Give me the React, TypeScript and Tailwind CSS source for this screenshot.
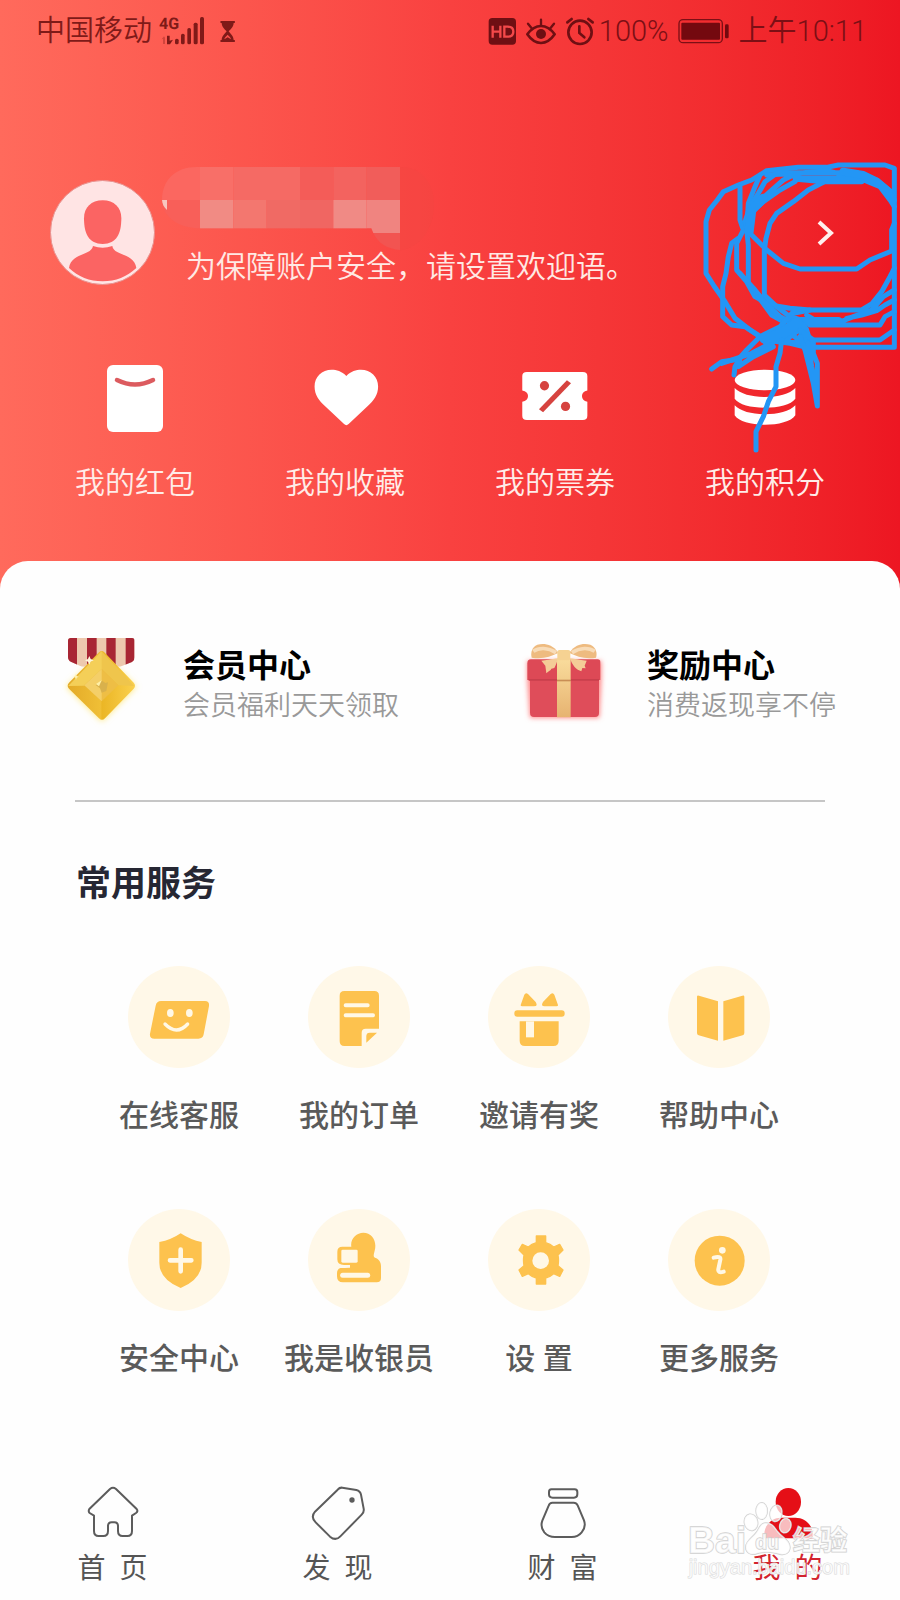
import type { ReactNode } from "react";

function SignalIcon() {
  return (
    <svg viewBox="475 42 144 96" className="h-8 w-12 shrink-0" fill="#7f1a18" aria-hidden="true">
      <text x="478" y="84" fontSize="48" fontWeight="700" fontFamily='"Liberation Sans Narrow", "Roboto", sans-serif' textRendering="geometricPrecision">4G</text>
      <path d="M486 115l7-9 3 4v19h-6v-15z" opacity=".35" />
      <path d="M502 104h8v15l10-3-9 14h-9z" />
      <rect x="526" y="113" width="11" height="17" rx="5" />
      <rect x="544" y="98" width="11" height="32" rx="5" />
      <rect x="563" y="81" width="11" height="49" rx="5" />
      <rect x="582" y="65" width="12" height="65" rx="5" />
      <rect x="601" y="48" width="12" height="82" rx="5" />
    </svg>
  );
}

function HourglassIcon() {
  return (
    <svg viewBox="655 54 60 72" className="h-6 w-5 shrink-0" fill="#7f1a18" aria-hidden="true">
      <rect x="662" y="60" width="44" height="6" rx="2" />
      <rect x="662" y="117" width="44" height="6" rx="2" />
      <path d="M666 65h36c0 12-9 19-15 26 6 8 15 14 15 27h-36c0-13 9-19 15-27-6-7-15-14-15-26z" />
      <path d="M674 115c1-6 5-9 10-14 5 5 9 8 10 14l-10-6z" fill="#fb514c" />
    </svg>
  );
}

function StatusIcons() {
  return (
    <svg viewBox="105 42 330 96" className="h-8 w-[110px] shrink-0" fill="none" stroke="#6f0f13" aria-hidden="true">
      <rect x="110" y="51" width="82" height="80" rx="11" fill="#6f0f13" stroke="none" />
      <path d="M122 74v36M145 74v36M122 92h23M157 77v30h10q17 0 17-15t-17-15z" stroke="#f4494a" strokeWidth="7" />
      <path d="M226 100q18-25 41-25t41 25q-18 26-41 26t-41-26z" strokeWidth="8" strokeLinejoin="round" />
      <circle cx="267" cy="99" r="15" fill="#6f0f13" stroke="none" />
      <path d="M267 56v16M228 68l11 14M306 68l-11 14" strokeWidth="7" strokeLinecap="round" />
      <circle cx="384" cy="94" r="35" strokeWidth="8" />
      <path d="M382 76v20l15 13M346 64l13-10M422 64l-13-10" strokeWidth="8" strokeLinecap="round" />
    </svg>
  );
}

function BatteryIcon() {
  return (
    <svg viewBox="675 48 162 84" className="h-7 w-[54px] shrink-0" fill="none" aria-hidden="true">
      <rect x="681" y="56" width="130" height="69" rx="12" stroke="#7c0f15" strokeWidth="4" />
      <rect x="688" y="65" width="116" height="51" rx="3" fill="#74090f" />
      <rect x="819" y="70" width="11" height="42" rx="4" fill="#74090f" />
    </svg>
  );
}

function StatusBar() {
  return (
    <div className="flex h-[62px] items-center justify-between pr-[33px] pl-9 text-[29px] leading-8 font-[350]">
      <div className="flex items-center text-[#7f1a18]">
        <span>中国移动</span>
        <span className="ml-[6px]"><SignalIcon /></span>
        <span className="ml-3"><HourglassIcon /></span>
      </div>
      <div className="flex items-center text-[#7c0f15]">
        <StatusIcons />
        <span className="ml-[2px]">100%</span>
        <span className="mr-2 ml-2"><BatteryIcon /></span>
        <span>上午10:11</span>
      </div>
    </div>
  );
}

function Avatar() {
  return (
    <svg viewBox="150 540 315 315" className="mt-[13px] h-[105px] w-[105px] shrink-0" role="img" aria-label="头像">
      <circle cx="307.500" cy="697.500" r="156" fill="#ffe4e4" stroke="#e88f8c" strokeWidth="3" />
      <path d="M252 655c0-33 22-54 56-54s56 21 56 54c0 46-14 77-56 77s-56-31-56-77z" fill="#fb6463" />
      <path d="M279 738q29 10 58 0c4 30 66 20 72 66-28 26-62 40-101 40s-74-14-101-40c6-46 66-36 72-66z" fill="#fb6463" />
    </svg>
  );
}

function MaskedName() {
  return (
    <svg viewBox="480 501 822 237" className="h-[79px] w-[274px] overflow-visible" aria-hidden="true">
      <path d="M1200 501c60 0 100 40 102 110 0 80-45 132-102 140z" fill="#f44542" opacity=".5" />
      <path d="M590 501h10v99H486c0-60 40-99 104-99z" fill="#fb6760" />
      <rect x="600" y="501" width="100" height="99" fill="#f86f68" />
      <rect x="700" y="501" width="200" height="99" fill="#f56a64" />
      <rect x="900" y="501" width="100" height="99" fill="#f45c58" />
      <rect x="1000" y="501" width="100" height="99" fill="#f3635f" />
      <rect x="1100" y="501" width="100" height="99" fill="#f15d5a" />
      <path d="M486 600h114v85c-60 0-112-30-114-85z" fill="#f85f59" />
      <path d="M486 600h15v30c-10-8-14-18-15-30z" fill="#f7c6bf" />
      <rect x="600" y="600" width="100" height="85" fill="#f18b84" />
      <rect x="700" y="600" width="100" height="85" fill="#f3776f" />
      <rect x="800" y="600" width="100" height="85" fill="#f06a64" />
      <rect x="900" y="600" width="100" height="85" fill="#f06662" />
      <rect x="1000" y="600" width="100" height="85" fill="#f08a85" />
      <path d="M1100 600h100v99h-80l-6-14h-14z" fill="#f08480" />
      <path d="M1120 699h80v51c-38-3-66-20-80-51z" fill="#f25451" />
    </svg>
  );
}

function Profile() {
  return (
    <div className="mt-[105px] flex items-start pr-[50px] pl-[50px]">
      <Avatar />
      <div className="ml-[5px] min-w-0 flex-1">
        <MaskedName />
        <p className="relative pt-px pl-[26px] text-[30px] leading-10 font-[350] whitespace-nowrap text-[#ffe9e4]">
          为保障账户安全，请设置欢迎语。
        </p>
      </div>
      <button type="button" aria-label="个人设置" className="flex h-[132px] w-[50px] shrink-0 items-center justify-center">
        <svg viewBox="0 0 24 30" className="h-[30px] w-6" fill="none" stroke="#fff0ee" strokeWidth="4">
          <path d="M6 4l12 11L6 26" />
        </svg>
      </button>
    </div>
  );
}

const quickLinks: { label: string; icon: ReactNode }[] = [
  {
    label: "我的红包",
    icon: (
      <svg viewBox="0 0 80 80" className="size-20" aria-hidden="true">
        <rect x="12" y="0" width="56" height="67" rx="6" fill="#fff" />
        <path d="M22 15q18 9 36 0" fill="none" stroke="#dc5b5f" strokeWidth="4.500" strokeLinecap="round" />
      </svg>
    ),
  },
  {
    label: "我的收藏",
    icon: (
      <svg viewBox="640 39 209 209" className="size-20" fill="#fff" aria-hidden="true">
        <path transform="scale(1 .871)" d="M748 78c12-15 26-19 38-19 26 0 45 21 45 50 0 26-12 42-27 59l-50 54q-6 7-12 0l-50-54c-15-17-27-33-27-59 0-29 19-50 45-50 12 0 26 4 38 19z" />
      </svg>
    ),
  },
  {
    label: "我的票券",
    icon: (
      <svg viewBox="1189 39 209 209" className="size-20" aria-hidden="true">
        <g transform="scale(1 .871)">
          <path d="M1220 66h146q12 0 12 12v43q-14 3-14 17t14 17v42q0 13-12 13h-146q-12 0-12-13v-42q15-3 15-17t-15-17V78q0-12 12-12z" fill="#fff" />
          <path d="M1257 182l73-87" stroke="#d6433f" strokeWidth="14" />
          <ellipse cx="1266" cy="107" rx="12" ry="14" fill="#d6433f" />
          <ellipse cx="1321" cy="169" rx="12" ry="14" fill="#d6433f" />
        </g>
      </svg>
    ),
  },
  {
    label: "我的积分",
    icon: (
      <svg viewBox="135 645 240 240" className="size-20" fill="#fff" aria-hidden="true">
        <ellipse cx="255" cy="690" rx="91" ry="31" />
        <path d="M164 714c32 36 150 36 182 0v32c-24 36-158 36-182 0z" />
        <path d="M164 766c32 36 150 36 182 0v30c-24 38-158 38-182 0z" />
      </svg>
    ),
  },
];

function Scribble() {
  return (
    <svg
      viewBox="0 0 660 960"
      className="pointer-events-none absolute top-[150px] right-0 h-[320px] w-[220px]"
      fill="none"
      stroke="#2396f5"
      strokeWidth="15"
      strokeLinejoin="round"
      strokeLinecap="round"
      aria-hidden="true"
    >
      <path d="M355 52L260 62 215 90 175 105 130 125 112 150 88 180 78 215V370L102 408 135 455 165 505 210 540 255 570 330 580 380 592H643V55L615 45H475L440 52H355" />
      <path d="M175 265L155 280 145 320 138 370 128 410V500L155 525 195 530 245 562 300 570" />
      <path d="M180 110V210L190 240 170 280V360L200 395 225 440 270 465 330 475 390 480H545L575 462 605 425 630 380 643 355" />
      <path d="M240 75L225 110 205 160 200 240 205 285V400L235 440 275 495 310 515" />
      <path d="M290 70L255 95 235 130 210 170 195 215 205 245 260 300 310 340 360 357H530L570 330 635 303V240L643 220" />
      <path d="M430 97L385 120 340 155 290 190 270 220 258 265 253 300V435L290 470 330 500 380 515" />
      <path d="M345 95L300 120 250 155 210 190M350 70L310 90 270 125 225 165M260 75L350 70 440 62 540 85 600 110 630 150 643 170M345 84H540M300 68H530L590 90 640 130M350 88L430 95H545" />
      <path d="M250 145L215 180 207 245" strokeWidth="28" />
      <path d="M490 65L550 75 590 95 620 120 638 150" strokeWidth="24" />
      <path d="M643 420L610 440 575 480 520 500 480 516H350M643 450L615 465 590 482 545 495 500 505M643 485L615 500 600 525H390M643 540L600 570H400M390 480L340 490 310 520" />
      <path d="M180 370L225 420 265 470 310 510 355 515 320 530 260 560 350 545 310 575 370 580 330 550" />
      <path d="M235 440L300 500 340 520 420 520 380 495" />
      <path d="M360 514H475" strokeWidth="26" />
      <path d="M95 657L125 635 175 628 200 600 240 560 300 530 345 480" />
      <path d="M125 640L215 610 300 565 350 520M162 675L165 650 180 625 175 650 220 620 280 590" />
      <path d="M255 565L300 555 350 520 370 540 385 590" strokeWidth="34" />
      <path d="M360 540L400 570 400 610 412 640V768L400 700 390 660 375 600 360 560M385 580L395 650 407 710" />
      <path d="M305 570L300 610 288 650V710L265 755 250 800 228 845V900" />
    </svg>
  );
}

function MedalIcon() {
  return (
    <svg viewBox="180 240 252 300" className="h-[100px] w-[84px] shrink-0" aria-hidden="true">
      <defs>
        <filter id="medal-glow" x="-30%" y="-30%" width="160%" height="160%">
          <feGaussianBlur stdDeviation="9" />
        </filter>
        <clipPath id="medal-ribbon">
          <path d="M212 264h184q8 0 8 8v50q0 10-8 14l-36 14H246l-32-14q-10-4-10-14v-50q0-8 8-8z" />
        </clipPath>
        <linearGradient id="medal-lower" x1="0" y1="0" x2="1" y2="0">
          <stop offset="0" stopColor="#e3aa28" />
          <stop offset=".49" stopColor="#f0bf36" />
          <stop offset=".51" stopColor="#ebb625" />
          <stop offset="1" stopColor="#fad04d" />
        </linearGradient>
      </defs>
      <path d="M305 310L408 410 306 514 200 410z" fill="#ffe87d" filter="url(#medal-glow)" />
      <g clipPath="url(#medal-ribbon)">
        <rect x="204" y="264" width="200" height="90" fill="#edc9ae" />
        <path d="M204 264h27v90h-27zM261 264h29v90h-29zM319 264h28v90h-28zM377 264h27v90h-27z" fill="#a82634" />
      </g>
      <path d="M297 307q8-8 16 0l88 91q8 9 0 18l-86 89q-9 9-18 0l-90-89q-8-9 0-18z" fill="url(#medal-lower)" />
      <path d="M305 304l97 104-47-2-50-48-52 50-48 0z" fill="#efc54c" />
      <path d="M305 304v54l-52 48-48 2z" fill="#f4cf58" />
      <path d="M305 357l50 49-50 48-52-48z" fill="#eebe45" />
      <path d="M305 357v97l-52-48z" fill="#f4cf68" />
      <path d="M287 405l20-13 9 7 8-2-5 26-14 5-5-13z" fill="#d9b14c" />
      <path d="M288 402l17-11-8 18z" fill="#fff0a9" />
      <path d="M268 318l4 9 9 4-9 4-4 9-4-9-9-4 9-4z" fill="#fff7dc" />
      <path d="M228 370l2 8 6 2-6 3-2 7-2-7-5-3 5-2z" fill="#fff1ac" />
    </svg>
  );
}

function GiftIcon() {
  return (
    <svg viewBox="210 255 264 270" className="h-[90px] w-[88px] shrink-0" aria-hidden="true">
      <defs>
        <filter id="gift-glow" x="-20%" y="-20%" width="140%" height="140%">
          <feGaussianBlur stdDeviation="8" />
        </filter>
        <linearGradient id="gift-band" x1="0" y1="0" x2="0" y2="1">
          <stop offset="0" stopColor="#f9dc9c" />
          <stop offset="1" stopColor="#e7b371" />
        </linearGradient>
      </defs>
      <path d="M232 332h222v55l-6 116H240l-8-116z" fill="#ff8585" filter="url(#gift-glow)" />
      <path d="M240 380h207v108q0 13-12 13H252q-12 0-12-13z" fill="#df4d5a" />
      <path d="M243 328h200q8 0 8 8v54H232v-50q0-12 11-12z" fill="#dd4956" />
      <path d="M236 387h211v5H236z" fill="#c93f4c" />
      <path d="M321 326h41v64h-41zM321 392h41v110h-41z" fill="url(#gift-band)" />
      <path d="M321 389h41v5h-41z" fill="#c98e55" />
      <path d="M323 305c-16-22-41-27-61-21-16 7-21 24-17 39 33 5 58-3 78-13z" fill="#eebb80" />
      <path d="M250 304c17-12 43-12 68 4" fill="none" stroke="#f8dcb8" strokeWidth="11" />
      <path d="M360 305c16-22 41-27 61-21 16 7 22 24 17 39-33 5-58-3-78-13z" fill="#eebb80" />
      <path d="M434 304c-17-12-43-12-68 4" fill="none" stroke="#f8dcb8" strokeWidth="11" />
      <path d="M324 325c-22 2-36 7-50 7l12 15 3 23c8-8 13-8 15-14l9-2c4-8 8-16 11-29zM360 325c22 2 36 7 50 7l-6 15 3 8-10-1-3 10c-14-4-28-18-34-39z" fill="#f4cc97" />
      <rect x="322" y="300" width="39" height="31" rx="6" fill="#f6d292" />
    </svg>
  );
}

function Promo({ icon, title, note }: { icon: ReactNode; title: string; note: string }) {
  return (
    <button type="button" className="flex items-center gap-[39px] text-left whitespace-nowrap">
      {icon}
      <span className="flex flex-col pt-3">
        <span className="text-[32px] leading-10 font-bold text-black">{title}</span>
        <span className="text-[27px] leading-10 font-[350] text-[#999999]">{note}</span>
      </span>
    </button>
  );
}

const services: { label: string; view: string; art: ReactNode }[] = [
  {
    label: "在线客服",
    view: "81 45 306 306",
    art: (
      <>
        <path d="M180 150h132q14 0 12 15l-16 85q-2 13-16 13H160q-15 0-13-15l17-84q3-14 16-14z" />
        <g fill="#fff8e6">
          <ellipse cx="208" cy="186" rx="10" ry="12" />
          <ellipse cx="265" cy="186" rx="10" ry="12" />
        </g>
        <path d="M192 219q35 36 68 0" fill="none" stroke="#fff8e6" strokeWidth="10" strokeLinecap="round" />
      </>
    ),
  },
  {
    label: "我的订单",
    view: "621 45 306 306",
    art: (
      <>
        <path d="M730 120h90q14 0 14 14v99h-40q-12 0-12 12v40h-52q-14 0-14-14V134q0-14 14-14z" />
        <path d="M734 163h66M734 193h82" stroke="#fff8e6" strokeWidth="12" strokeLinecap="round" />
        <path d="M796 275v-20q0-10 10-10h22z" />
      </>
    ),
  },
  {
    label: "邀请有奖",
    view: "111 45 306 306",
    art: (
      <>
        <path d="M209 162l11-31q4-8 11-2l23 24q8 13-5 13h-35q-6 0-5-4zM321 162l-11-31q-4-8-11-2l-23 24q-8 13 5 13h35q6 0 5-4z" />
        <rect x="190" y="178" width="151" height="19" rx="9" />
        <path d="M206 211h117v58q0 16-16 16h-85q-16 0-16-16z" />
        <path d="M225 211h24v48h-24z" fill="#fff8e6" />
      </>
    ),
  },
  {
    label: "帮助中心",
    view: "651 45 306 306",
    art: (
      <>
        <path d="M738 137q0-5 6-3l57 17v118l-58-16q-5-2-5-7zM880 137q0-5-6-3l-57 17v118l58-16q5-2 5-7z" />
      </>
    ),
  },
  {
    label: "安全中心",
    view: "81 57 306 306",
    art: (
      <>
        <path d="M239 130q30 20 63 26v62q0 50-63 76-64-26-64-76v-62q35-6 64-26z" />
        <path d="M239 179v65M207 211h64" stroke="#fff8e6" strokeWidth="14" strokeLinecap="round" />
      </>
    ),
  },
  {
    label: "我是收银员",
    view: "621 57 306 306",
    art: (
      <>
        <path d="M751 170c-4-23 15-42 36-42 26 0 42 25 34 54-3 13-5 17 1 21 12 4 18 13 18 27v34q0 13-13 13H726q-18 0-18-18v-9q0-17 17-17h22v-8h-18q-20 0-20-17v-23q0-15 15-15z" />
        <rect x="721" y="179" width="49" height="39" rx="4" fill="#fff8e6" />
        <path d="M725 256h75" stroke="#fff8e6" strokeWidth="15" strokeLinecap="round" />
        <path d="M706 226q20 6 42 4l-16 4h-26z" fill="#fff8e6" />
      </>
    ),
  },
  {
    label: "设 置",
    view: "111 57 306 306",
    art: (
      <>
        <path
          d="M256 138h28v20q14 4 24 13l18-8 10 17-15 15q3 16 0 32l15 13-10 19-18-8q-10 9-24 13v18h-28v-18q-14-4-24-13l-18 8-10-19 15-13q-3-16 0-32l-15-15 10-17 18 8q10-9 24-13z"
          stroke="#fdc24e"
          strokeWidth="4"
          strokeLinejoin="round"
        />
        <circle cx="269" cy="212" r="25" fill="#fff8e6" />
      </>
    ),
  },
  {
    label: "更多服务",
    view: "651 57 306 306",
    art: (
      <>
        <circle cx="806" cy="212" r="75" />
        <circle cx="814" cy="181" r="10" fill="#fff8e6" />
        <path d="M788 203q22-6 20 6l-6 28q-2 14 16 8" fill="none" stroke="#fff8e6" strokeWidth="12" strokeLinecap="round" />
      </>
    ),
  },
];

const tabs: { label: string; active?: boolean; icon: ReactNode }[] = [
  {
    label: "首  页",
    icon: (
      <svg viewBox="247 66 180 180" className="size-[60px]" fill="none" stroke="#5c5c5c" strokeWidth="6" strokeLinejoin="round" aria-hidden="true">
        <path d="M328 87q9-7 18 0l62 60q5 7-2 12l-12 8v46q0 15-14 15h-14q-14 0-14-15v-15q0-11-11-11h-8q-11 0-11 11v15q0 15-14 15h-14q-14 0-14-15v-46l-13-8q-5-5-1-12z" />
      </svg>
    ),
  },
  {
    label: "发  现",
    icon: (
      <svg viewBox="922 66 180 180" className="size-[60px]" fill="none" stroke="#5c5c5c" strokeWidth="6" strokeLinejoin="round" aria-hidden="true">
        <path d="M1011 89q6-7 14-6l42 7q12 3 14 14l8 42q2 10-6 18l-64 65q-14 15-31 1l-43-43q-16-16-2-32z" />
        <circle cx="1054" cy="120" r="8" fill="#5c5c5c" stroke="none" />
      </svg>
    ),
  },
  {
    label: "财  富",
    icon: (
      <svg viewBox="97 66 180 180" className="size-[60px]" fill="none" stroke="#5c5c5c" strokeWidth="6" strokeLinejoin="round" aria-hidden="true">
        <path d="M152 88h70q8 0 8 8v7q0 10-10 10h-64q-11 0-11-10v-7q0-8 7-8z" />
        <path d="M155 128h64q8 0 12 8l19 45q7 20-7 36-11 14-30 14h-50q-20 0-32-14-13-16-6-35l19-45q3-9 11-9z" />
      </svg>
    ),
  },
  {
    label: "我  的",
    active: true,
    icon: (
      <svg viewBox="772 66 180 180" className="size-[60px]" fill="#e50f17" aria-hidden="true">
        <ellipse cx="863" cy="126" rx="38" ry="42" />
        <path d="M791 235v-12c0-26 21-50 50-50h43c30 0 52 23 52 50v12z" />
      </svg>
    ),
  },
];

function Watermark() {
  return (
    <svg viewBox="560 120 501 249" className="pointer-events-none absolute right-[47px] bottom-[17px] h-[83px] w-[167px]" fill="#fff" fillOpacity=".72" stroke="#cfcfcf" strokeWidth="4" aria-hidden="true">
      <g fontFamily='"Liberation Sans", "Noto Sans CJK SC", sans-serif' fontWeight="700" paintOrder="stroke">
        <text x="566" y="281" fontSize="112">Bai</text>
        <path d="M800 192c20 0 26 15 36 27 14 18 36 24 36 46 0 18-16 25-32 20-24-7-50-7-72 0-16 4-29-5-29-20 0-20 22-30 33-46 8-13 12-27 28-27z" />
        <ellipse cx="755" cy="190" rx="20" ry="25" transform="rotate(-12 755 190)" />
        <ellipse cx="787" cy="156" rx="17" ry="25" />
        <ellipse cx="830" cy="163" rx="18" ry="25" transform="rotate(12 830 163)" />
        <ellipse cx="858" cy="200" rx="17" ry="22" transform="rotate(15 858 200)" />
        <text x="768" y="270" fontSize="58">du</text>
        <text x="880" y="274" fontSize="82">经验</text>
      </g>
      <text x="568" y="346" fontSize="60" fontFamily='"Liberation Sans", sans-serif' strokeWidth="3" stroke="#dadada" paintOrder="stroke">jingyan.baidu.com</text>
    </svg>
  );
}

export default function App() {
  return (
    <div className='relative min-h-screen overflow-x-hidden bg-[#fefefe] font-["Roboto","Noto_Sans_CJK_SC",sans-serif]' lang="zh-CN">
      <header className="relative bg-linear-to-r from-[#ff6a5c] via-[#f94140] to-[#ed1622] pb-[90px]">
        <StatusBar />
        <Profile />
        <div className="mt-[66px] grid grid-cols-4 px-[30px]">
          {quickLinks.map((item) => (
            <button key={item.label} type="button" className="flex flex-col items-center gap-[18px] text-[30px] leading-10 font-[350] text-[#ffece8]">
              {item.icon}
              <span>{item.label}</span>
            </button>
          ))}
        </div>
        <Scribble />
      </header>

      <main className="relative -mt-8 rounded-t-[28px] bg-[#fefefe] pt-[69px]">
        <section className="grid grid-cols-2 gap-20 pl-[60px]">
          <Promo icon={<MedalIcon />} title="会员中心" note="会员福利天天领取" />
          <Promo icon={<GiftIcon />} title="奖励中心" note="消费返现享不停" />
        </section>
        <hr className="mx-[75px] mt-[70px] h-[2px] border-0 bg-[#c6c6c6]" />

        <section>
          <h2 className="mt-[59px] pl-[76px] text-[35px] leading-[48px] font-bold text-[#262733]">常用服务</h2>
          <div className="mt-[57px] grid grid-cols-4 gap-y-[73px] pr-[91px] pl-[89px]">
            {services.map((item) => (
              <button key={item.label} type="button" className="flex flex-col items-center gap-[28px] text-[30px] leading-10 font-medium whitespace-nowrap text-[#5a5a5a]">
                <span className="size-[102px] rounded-full bg-[#fff8e8]">
                  <svg viewBox={item.view} className="size-full" fill="#fdc24e" aria-hidden="true">
                    {item.art}
                  </svg>
                </span>
                <span>{item.label}</span>
              </button>
            ))}
          </div>
        </section>
      </main>

      <nav className="relative mt-[103px] grid grid-cols-4 pb-[14px]">
        {tabs.map((tab) => (
          <a
            key={tab.label}
            href="#"
            aria-current={tab.active ? "page" : undefined}
            className={
              tab.active
                ? "flex flex-col items-center gap-[11px] text-[28px] leading-8 whitespace-pre text-[#d3232d]"
                : "flex flex-col items-center gap-[11px] text-[28px] leading-8 whitespace-pre text-[#555555]"
            }
          >
            {tab.icon}
            <span>{tab.label}</span>
          </a>
        ))}
        <Watermark />
      </nav>
    </div>
  );
}
